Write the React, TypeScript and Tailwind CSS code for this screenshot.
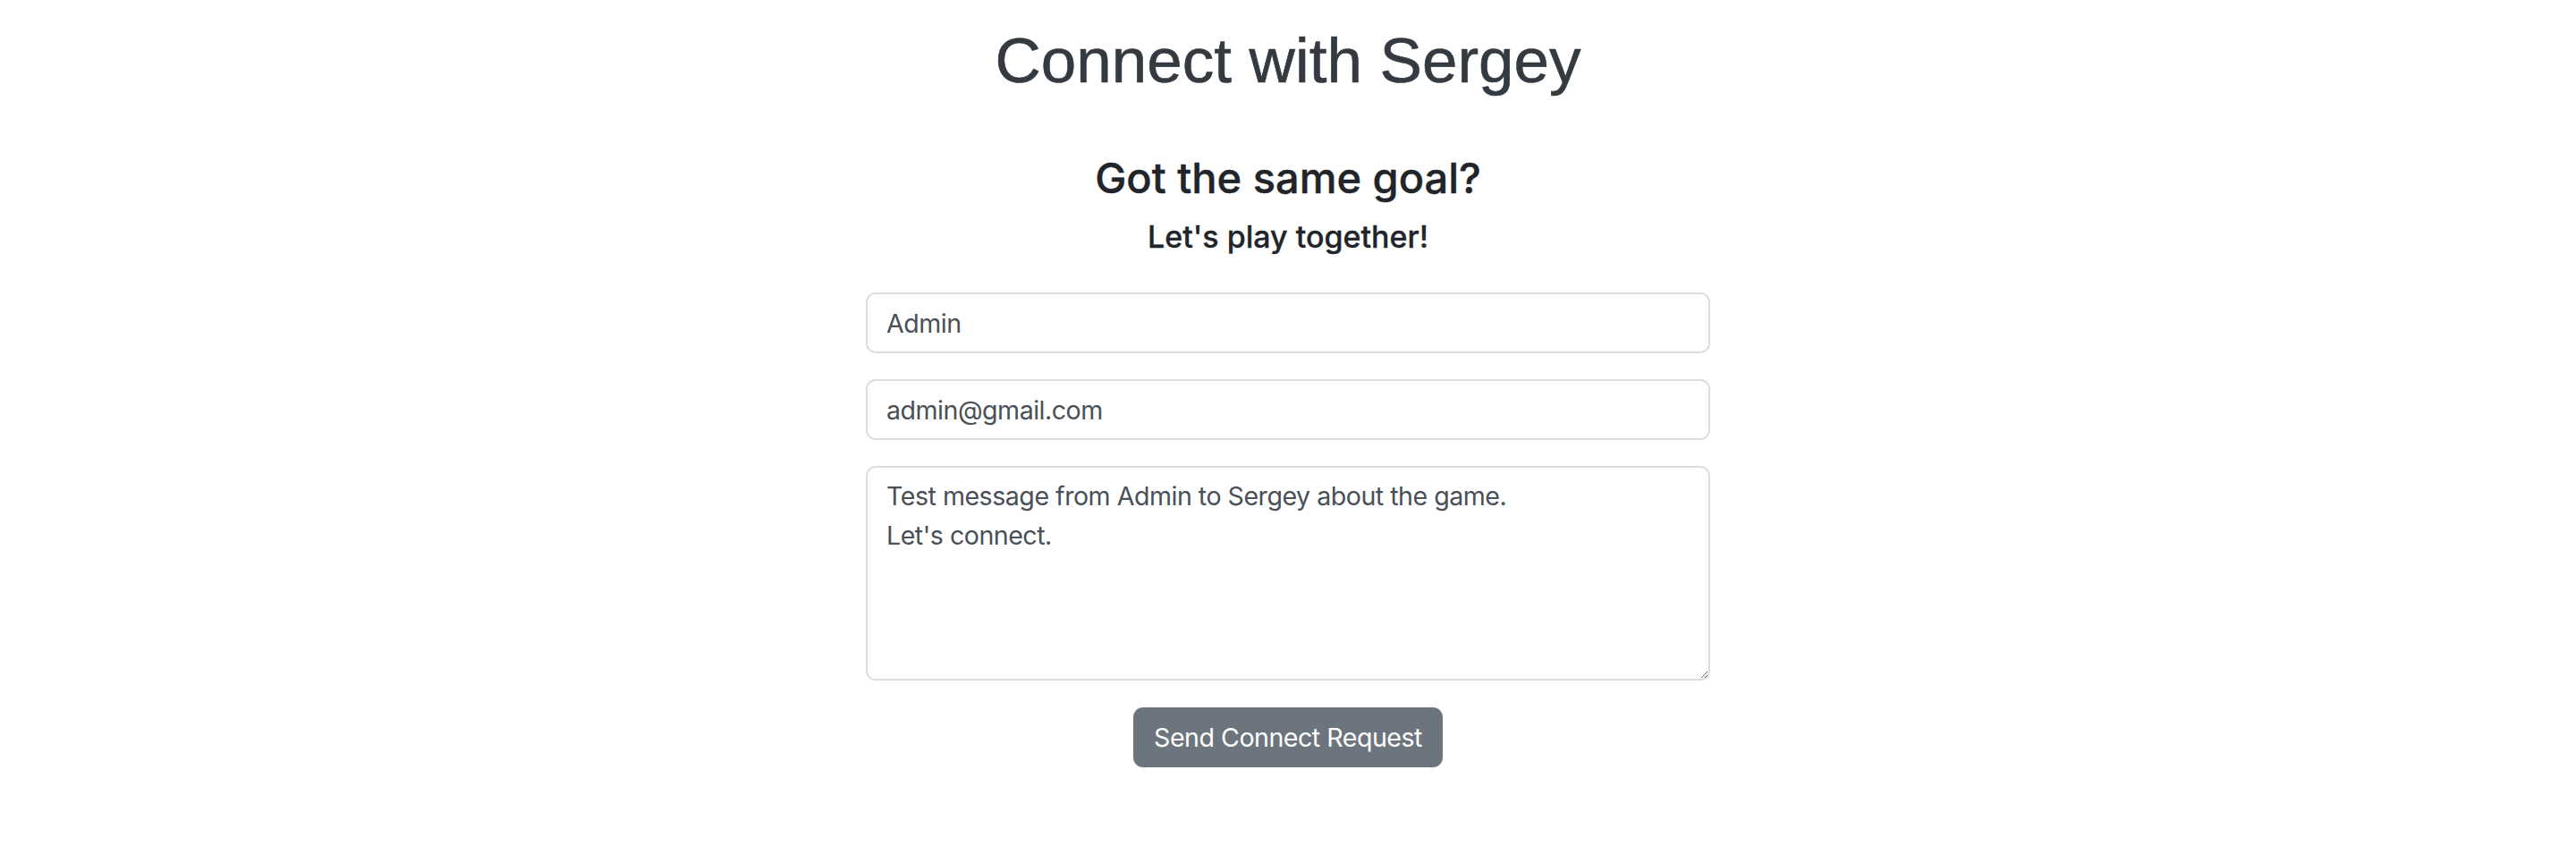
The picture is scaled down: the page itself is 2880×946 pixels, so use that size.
import { useState } from 'react'

// simple connect form, bootstrap-ish look
const inputCls =
  "w-full h-[68px] rounded-[11px] border-2 border-[#dadee2] bg-white px-[21px] text-[28.6px] leading-[43px] tracking-[-0.5px] text-[#495057] outline-none"

export default function App() {
  const [name, setName] = useState('Admin')
  const [email, setEmail] = useState('admin@gmail.com')
  const [message, setMessage] = useState(
    "Test message from Admin to Sergey about the game.\nLet's connect."
  )

  return (
    <div className="min-h-screen bg-white flex flex-col items-center font-['Inter',sans-serif]">
      <h1 className="mt-[25px] text-[71px] leading-[85px] text-[#343a40] font-['Liberation_Sans',Arial,sans-serif] [-webkit-text-stroke:0.6px_#343a40]">
        Connect with Sergey
      </h1>

      <h4 className="mt-[61px] text-[47px] leading-[55px] font-medium text-[#212529] [-webkit-text-stroke:0.4px_#212529]">
        Got the same goal?
      </h4>
      <h5 className="mt-[20px] text-[34px] leading-[37px] font-medium text-[#212529] [-webkit-text-stroke:0.3px_#212529]">
        Let's play together!
      </h5>

      <form
        className="mt-[44px] w-[944px] flex flex-col items-center gap-[29px]"
        onSubmit={(e) => e.preventDefault()}
      >
        <input
          className={inputCls}
          value={name}
          onChange={(e) => setName(e.target.value)}
        />
        <input
          className={inputCls}
          value={email}
          onChange={(e) => setEmail(e.target.value)}
        />
        <textarea
          className="w-full h-[240px] rounded-[11px] border-2 border-[#dadee2] bg-white px-[21px] py-[10px] text-[28.6px] leading-[44px] tracking-[-0.5px] text-[#495057] outline-none resize-y"
          value={message}
          onChange={(e) => setMessage(e.target.value)}
        />
        <button
          type="submit"
          className="mt-px h-[67px] w-[346px] rounded-[11px] bg-[#6c757d] text-white text-[28.6px] leading-[43px] tracking-[-0.5px]"
        >
          Send Connect Request
        </button>
      </form>
    </div>
  )
}
